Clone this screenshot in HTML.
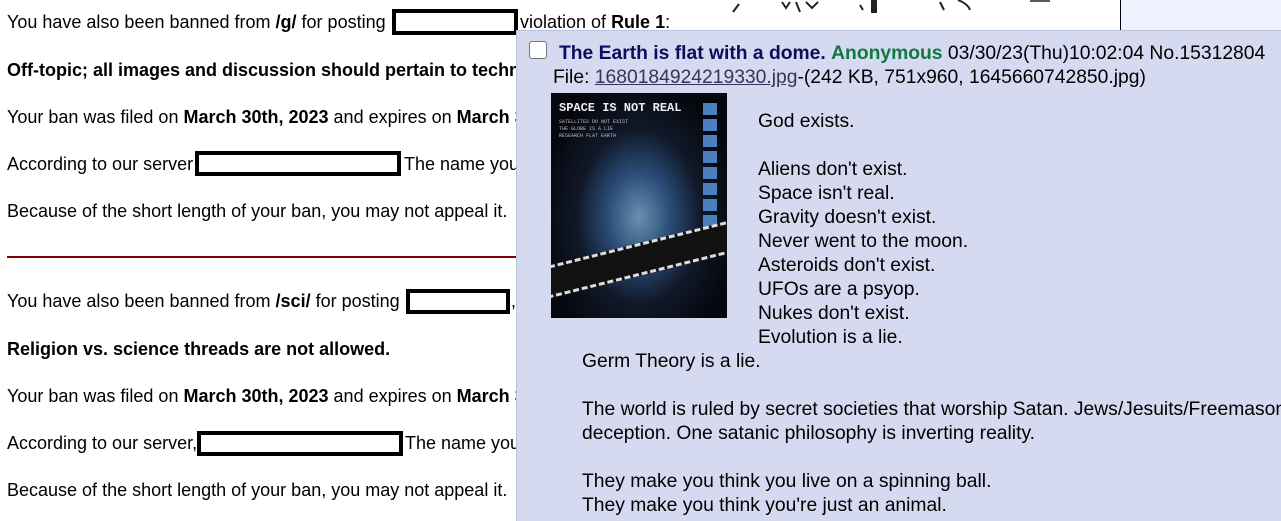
<!DOCTYPE html>
<html><head><meta charset="utf-8"><style>
body{margin:0;width:1281px;height:511px;overflow:hidden;background:#fff;font-family:"Liberation Sans",Arial,sans-serif;font-size:18px;color:#000;position:relative}
.l{position:absolute;left:7px;white-space:nowrap;line-height:20px}
.box{position:absolute;border:4px solid #000;background:#fff;box-sizing:border-box}
#pop{position:absolute;left:516px;top:30px;width:780px;height:490px;background:#d6daf0;border-left:1px solid #b7c5d9;border-top:1px solid #b7c5d9;overflow:hidden}
.p{position:absolute;white-space:nowrap;line-height:20px;font-size:19.3px}
</style></head><body>
<div class="l" style="top:12px">You have also been banned from <b>/g/</b> for posting</div>
<div class="box" style="left:392px;top:9px;width:126px;height:26px"></div>
<div class="l" style="top:12px;left:520px">violation of <b>Rule 1</b>:</div>
<div style="position:absolute;left:1120px;top:0;width:1px;height:30px;background:#000"></div>
<div style="position:absolute;left:1121px;top:0;width:160px;height:30px;background:#eef2ff"></div>
<svg style="position:absolute;left:730px;top:0" width="380" height="16"><g stroke="#222" stroke-width="2" fill="none"><path d="M3 12 L9 4"/><path d="M52 2 L56 8 L60 2 M66 2 L70 12 M76 2 L82 8 L88 2"/><path d="M144 0 L144 13" stroke-width="6"/><path d="M130 5 L133 10"/><path d="M210 2 L214 10 M228 0 Q238 4 240 10"/><path d="M300 1 L320 1" stroke-width="1.5"/></g></svg>
<div class="l" style="top:60px"><b>Off-topic; all images and discussion should pertain to technology</b></div>
<div class="l" style="top:107px">Your ban was filed on <b>March 30th, 2023</b> and expires on <b>March 30th</b></div>
<div class="l" style="top:154px">According to our server</div>
<div class="box" style="left:195px;top:151px;width:206px;height:25px"></div>
<div class="l" style="top:154px;left:404px">The name you</div>
<div class="l" style="top:201px">Because of the short length of your ban, you may not appeal it.</div>
<div style="position:absolute;left:7px;top:256px;width:520px;height:2px;background:#800000"></div>
<div class="l" style="top:291px">You have also been banned from <b>/sci/</b> for posting</div>
<div class="box" style="left:406px;top:289px;width:104px;height:25px"></div>
<div class="l" style="top:291px;left:511px">,</div>
<div class="l" style="top:339px"><b>Religion vs. science threads are not allowed.</b></div>
<div class="l" style="top:386px">Your ban was filed on <b>March 30th, 2023</b> and expires on <b>March 30th</b></div>
<div class="l" style="top:433px">According to our server,</div>
<div class="box" style="left:197px;top:431px;width:206px;height:25px"></div>
<div class="l" style="top:433px;left:405px">The name you</div>
<div class="l" style="top:480px">Because of the short length of your ban, you may not appeal it.</div>

<div id="pop">
<div style="position:absolute;left:12px;top:10px;width:16px;height:16px;border:1px solid #767676;border-radius:3px;background:#fff"></div>
<div class="p" style="left:42px;top:13px"><b style="color:#0f0c5d">The Earth is flat with a dome.</b> <b style="color:#117743">Anonymous</b> 03/30/23(Thu)10:02:04 No.15312804</div>
<div class="p" style="left:36px;top:37px">File: <span style="color:#34345c;text-decoration:underline">1680184924219330.jpg</span>-(242 KB, 751x960, 1645660742850.jpg)</div>
<div style="position:absolute;left:34px;top:62px;width:176px;height:225px;overflow:hidden;background:radial-gradient(ellipse at 50% 55%,#6a8fb0 0,#2b4d78 25%,#101828 50%,#05070d 80%)">
<div style="position:absolute;left:8px;top:8px;color:#eee;font-size:12px;font-family:'Liberation Mono',monospace;font-weight:bold;white-space:nowrap">SPACE IS NOT REAL</div>
<div style="position:absolute;left:8px;top:26px;color:#bbb;font-size:5px;line-height:7px;font-family:'Liberation Mono',monospace">SATELLITES DO NOT EXIST<br>THE GLOBE IS A LIE<br>RESEARCH FLAT EARTH</div>
<div style="position:absolute;left:152px;top:10px;width:14px;height:130px;background:repeating-linear-gradient(#4a80c0 0 12px,transparent 12px 16px)"></div>
<div style="position:absolute;left:-10px;top:150px;width:200px;height:26px;background:#111;transform:rotate(-14deg);border-top:3px dashed #ddd;border-bottom:3px dashed #ddd"></div>
</div>
<div class="p" style="left:241px;top:79px;line-height:24px">God exists.<br><br>Aliens don't exist.<br>Space isn't real.<br>Gravity doesn't exist.<br>Never went to the moon.<br>Asteroids don't exist.<br>UFOs are a psyop.<br>Nukes don't exist.<br>Evolution is a lie.</div>
<div class="p" style="left:65px;top:319px;line-height:24px">Germ Theory is a lie.<br><br>The world is ruled by secret societies that worship Satan. Jews/Jesuits/Freemasons<br>deception. One satanic philosophy is inverting reality.<br><br>They make you think you live on a spinning ball.<br>They make you think you're just an animal.</div>
</div>
</body></html>
